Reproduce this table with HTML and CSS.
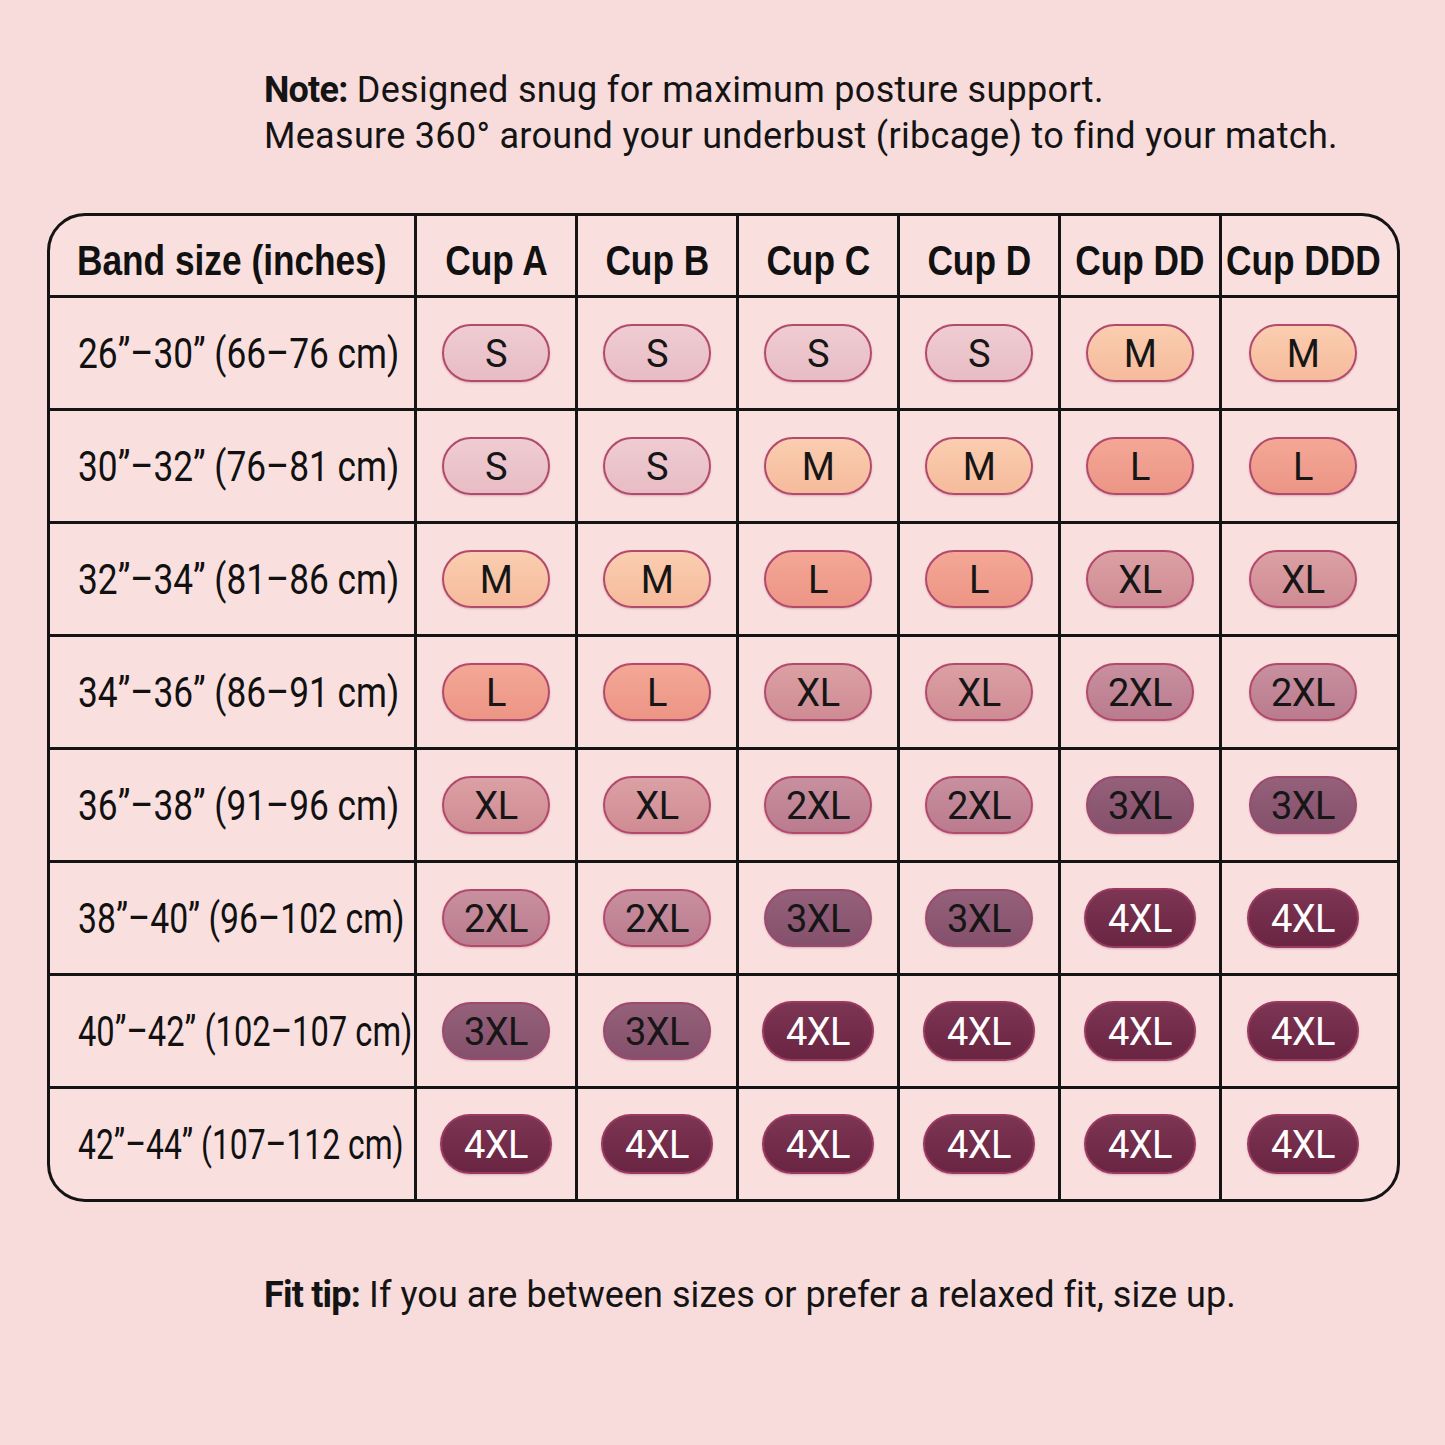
FILE: index.html
```html
<!DOCTYPE html>
<html lang="en">
<head>
<meta charset="utf-8">
<title>Size chart</title>
<link rel="stylesheet" href="styles.css">
</head>
<body>
<main class="page">
  <p class="note"><b>Note:</b> Designed snug for maximum posture support.<br>Measure 360° around your underbust (ribcage) to find your match.</p>

  <div class="chart">
    <div class="hd first"><span class="narrow">Band size (inches)</span></div>
    <div class="hd"><span class="narrow">Cup A</span></div>
    <div class="hd"><span class="narrow">Cup B</span></div>
    <div class="hd"><span class="narrow">Cup C</span></div>
    <div class="hd"><span class="narrow">Cup D</span></div>
    <div class="hd"><span class="narrow">Cup DD</span></div>
    <div class="hd last"><span class="narrow">Cup DDD</span></div>

    <div class="band"><span class="narrow">26”–30” (66–76 cm)</span></div>
    <div class="cell"><span class="pill s">S</span></div>
    <div class="cell"><span class="pill s">S</span></div>
    <div class="cell"><span class="pill s">S</span></div>
    <div class="cell"><span class="pill s">S</span></div>
    <div class="cell"><span class="pill m">M</span></div>
    <div class="cell last"><span class="pill m">M</span></div>

    <div class="band"><span class="narrow">30”–32” (76–81 cm)</span></div>
    <div class="cell"><span class="pill s">S</span></div>
    <div class="cell"><span class="pill s">S</span></div>
    <div class="cell"><span class="pill m">M</span></div>
    <div class="cell"><span class="pill m">M</span></div>
    <div class="cell"><span class="pill l">L</span></div>
    <div class="cell last"><span class="pill l">L</span></div>

    <div class="band"><span class="narrow">32”–34” (81–86 cm)</span></div>
    <div class="cell"><span class="pill m">M</span></div>
    <div class="cell"><span class="pill m">M</span></div>
    <div class="cell"><span class="pill l">L</span></div>
    <div class="cell"><span class="pill l">L</span></div>
    <div class="cell"><span class="pill xl">XL</span></div>
    <div class="cell last"><span class="pill xl">XL</span></div>

    <div class="band"><span class="narrow">34”–36” (86–91 cm)</span></div>
    <div class="cell"><span class="pill l">L</span></div>
    <div class="cell"><span class="pill l">L</span></div>
    <div class="cell"><span class="pill xl">XL</span></div>
    <div class="cell"><span class="pill xl">XL</span></div>
    <div class="cell"><span class="pill x2">2XL</span></div>
    <div class="cell last"><span class="pill x2">2XL</span></div>

    <div class="band"><span class="narrow">36”–38” (91–96 cm)</span></div>
    <div class="cell"><span class="pill xl">XL</span></div>
    <div class="cell"><span class="pill xl">XL</span></div>
    <div class="cell"><span class="pill x2">2XL</span></div>
    <div class="cell"><span class="pill x2">2XL</span></div>
    <div class="cell"><span class="pill x3">3XL</span></div>
    <div class="cell last"><span class="pill x3">3XL</span></div>

    <div class="band"><span class="narrow tight">38”–40” (96–102 cm)</span></div>
    <div class="cell"><span class="pill x2">2XL</span></div>
    <div class="cell"><span class="pill x2">2XL</span></div>
    <div class="cell"><span class="pill x3">3XL</span></div>
    <div class="cell"><span class="pill x3">3XL</span></div>
    <div class="cell"><span class="pill x4">4XL</span></div>
    <div class="cell last"><span class="pill x4">4XL</span></div>

    <div class="band"><span class="narrow tighter">40”–42” (102–107 cm)</span></div>
    <div class="cell"><span class="pill x3">3XL</span></div>
    <div class="cell"><span class="pill x3">3XL</span></div>
    <div class="cell"><span class="pill x4">4XL</span></div>
    <div class="cell"><span class="pill x4">4XL</span></div>
    <div class="cell"><span class="pill x4">4XL</span></div>
    <div class="cell last"><span class="pill x4">4XL</span></div>

    <div class="band"><span class="narrow tightest">42”–44” (107–112 cm)</span></div>
    <div class="cell"><span class="pill x4">4XL</span></div>
    <div class="cell"><span class="pill x4">4XL</span></div>
    <div class="cell"><span class="pill x4">4XL</span></div>
    <div class="cell"><span class="pill x4">4XL</span></div>
    <div class="cell"><span class="pill x4">4XL</span></div>
    <div class="cell last"><span class="pill x4">4XL</span></div>
  </div>

  <p class="tip"><b>Fit tip:</b> If you are between sizes or prefer a relaxed fit, size up.</p>
</main>
</body>
</html>
```

FILE: styles.css
```css
html, body {
  margin: 0;
  padding: 0;
  background: #f8dbdb;
}

.page {
  width: 1445px;
  height: 1445px;
  box-sizing: border-box;
  padding-top: 67px;
  color: #111;
}

.note, .tip {
  font-family: Roboto, "Liberation Sans", sans-serif;
  font-size: 36px;
  letter-spacing: 0.3px;
  line-height: 46px;
  margin: 0 0 0 264px;
  color: #141414;
}

.note b, .tip b {
  font-weight: 700;
  letter-spacing: -0.8px;
}

.chart {
  margin: 54px 0 0 47px;
  width: 1353px;
  box-sizing: border-box;
  border: 3px solid #141414;
  border-radius: 38px;
  overflow: hidden;
  background: #141414;
  display: grid;
  grid-template-columns: 364px 158px 158px 158px 158px 158px 175px;
  grid-template-rows: 79px repeat(8, 110px);
  gap: 3px;
}

.hd, .band, .cell {
  background: #fadfdf;
  display: flex;
  align-items: center;
  overflow: visible;
}

.narrow {
  display: inline-block;
  white-space: nowrap;
  transform: scaleX(0.82);
}

.hd {
  justify-content: center;
  padding-top: 9px;
  font-family: "Liberation Sans", Arial, sans-serif;
  font-weight: 700;
  font-size: 43px;
}

.hd .narrow {
  transform-origin: center;
}

.hd.first {
  justify-content: flex-start;
  padding-left: 27px;
}

.hd.first .narrow,
.band .narrow {
  transform-origin: left center;
}

.band {
  padding-left: 28px;
  font-family: Roboto, "Liberation Sans", sans-serif;
  font-size: 43px;
}

.band .narrow {
  transform: scaleX(0.82);
}

.band .narrow.tight {
  transform: scaleX(0.785);
}

.band .narrow.tighter {
  transform: scaleX(0.76);
}

.band .narrow.tightest {
  transform: scaleX(0.74);
}

.cell {
  justify-content: center;
}

.hd.last, .cell.last {
  padding-right: 13px;
}

.pill {
  box-sizing: border-box;
  width: 108px;
  height: 58px;
  padding-top: 2px;
  border-radius: 29px;
  border: 2px solid #b24a6c;
  display: flex;
  align-items: center;
  justify-content: center;
  font-family: Roboto, "Liberation Sans", sans-serif;
  font-size: 38px;
  letter-spacing: -0.5px;
  color: #161616;
  box-shadow: 0 1px 2px rgba(120, 40, 70, 0.25);
}

.s  { background: linear-gradient(180deg, #efccd2, #e8bcc4); }
.m  { background: linear-gradient(180deg, #fbcdb0, #f5bb9c); }
.l  { background: linear-gradient(180deg, #f4a796, #ec9585); }
.xl { background: linear-gradient(180deg, #dba0a4, #cf8b93); }
.x2 { background: linear-gradient(180deg, #c8909f, #ba7b8e); }
.x3 { background: linear-gradient(180deg, #95607a, #84506b); border-color: #9b4a6e; }
.x4 {
  width: 112px;
  height: 60px;
  border-radius: 30px;
  background: linear-gradient(180deg, #7c3552, #6a2542);
  border-color: #9a3a60;
  color: #fff;
}

.tip {
  margin-top: 70px;
  letter-spacing: 0.05px;
}
```
